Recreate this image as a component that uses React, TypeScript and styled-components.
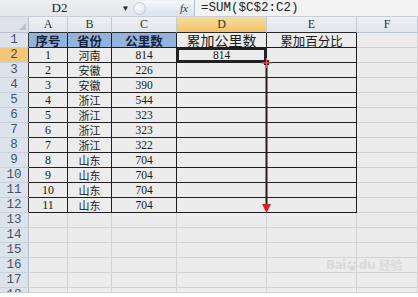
import React from "react";
import styled, { createGlobalStyle } from "styled-components";

const GlobalStyle = createGlobalStyle`
  body {
    margin: 0;
    background: #fff;
  }
`;

const rows: [number, string, number][] = [
  [1, "河南", 814],
  [2, "安徽", 226],
  [3, "安徽", 390],
  [4, "浙江", 544],
  [5, "浙江", 323],
  [6, "浙江", 323],
  [7, "浙江", 322],
  [8, "山东", 704],
  [9, "山东", 704],
  [10, "山东", 704],
  [11, "山东", 704],
];

const letters = ["A", "B", "C", "D", "E", "F"];

const Page = styled.div`
  width: 418px;
  height: 293px;
  overflow: hidden;
  background: #ececec;
`;

const FormulaBar = styled.div`
  height: 17px;
  display: flex;
  align-items: stretch;
  background: linear-gradient(#eef0f3, #e2e5ea);
  border-bottom: 1px solid #c9ced6;
  box-sizing: border-box;
`;

const NameBox = styled.div`
  width: 119px;
  display: flex;
  align-items: center;
  justify-content: center;
  font-family: "Liberation Serif", serif;
  font-size: 13px;
  color: #222;
`;

const DropArrow = styled.div`
  width: 13px;
  display: flex;
  align-items: center;
  justify-content: center;
  font-size: 8px;
  color: #222;
`;

const FxPill = styled.div`
  width: 62px;
  margin: 1px 0;
  display: flex;
  align-items: center;
  justify-content: space-between;
  padding: 0 6px 0 1px;
  box-sizing: border-box;
  border-radius: 8px 0 0 8px;
  background: linear-gradient(#f5f8fc, #dbe2ed);
`;

const Knob = styled.div`
  width: 11px;
  height: 11px;
  border-radius: 50%;
  border: 1px solid #c4ccd8;
  background: radial-gradient(circle at 40% 35%, #ffffff, #d6dde8);
`;

const Fx = styled.span`
  font-family: "Liberation Serif", serif;
  font-style: italic;
  font-size: 11px;
  color: #333;
`;

const FormulaInput = styled.div`
  flex: 1;
  display: flex;
  align-items: center;
  padding-left: 6px;
  background: #f3f3f3;
  border-left: 1px solid #b9bfc8;
  font-family: "Liberation Mono", monospace;
  font-size: 12.5px;
  color: #222;
`;

const Sheet = styled.div`
  position: relative;
  display: grid;
  grid-template-columns: 29px 39px 44px 65px 90px 90px 1fr;
  grid-template-rows: 16px repeat(17, 15px) 5px;
`;

const Corner = styled.div`
  position: relative;
  background: #dfe3e9;
  border-right: 1px solid #b8c2ce;
  border-bottom: 1px solid #b8c2ce;
  box-sizing: border-box;

  &::after {
    content: "";
    position: absolute;
    right: 2px;
    bottom: 2px;
    border-left: 7px solid transparent;
    border-bottom: 7px solid #b7bfca;
  }
`;

const ColHead = styled.div<{ $active?: boolean; $boxed?: boolean }>`
  display: flex;
  align-items: center;
  justify-content: center;
  box-sizing: border-box;
  background: ${(p) =>
    p.$active
      ? "linear-gradient(#f9dc9c, #f1c36a)"
      : "linear-gradient(#eef1f5, #e0e5eb)"};
  border-right: 1px solid #c3cad3;
  border-bottom: 1px solid ${(p) => (p.$boxed ? "#2a2a2a" : "#b8c2ce")};
  font-family: "Liberation Serif", serif;
  font-size: 12px;
  color: #333;
`;

const RowHead = styled.div<{ $active?: boolean; $boxed?: boolean }>`
  display: flex;
  align-items: flex-start;
  justify-content: center;
  overflow: hidden;
  box-sizing: border-box;
  line-height: 15px;
  background: ${(p) => (p.$active ? "#f4c67c" : "#dce3ec")};
  border-right: 1px solid ${(p) => (p.$boxed ? "#3a3a3a" : "#b3bfcc")};
  border-bottom: 1px solid #c8d0da;
  font-family: "Liberation Mono", monospace;
  font-size: 12.5px;
  color: ${(p) => (p.$active ? "#6a4a1a" : "#45536b")};
`;

type CellKind = "num" | "cjk" | "head" | "title";

const fontFor: Record<CellKind, string> = {
  num: '11.5px "Liberation Serif", serif',
  cjk: '11px "Noto Sans CJK SC", sans-serif',
  head: '700 12.5px "Noto Sans CJK SC", sans-serif',
  title: '13px "Noto Sans CJK SC", sans-serif',
};

const Cell = styled.div<{
  $boxed?: boolean;
  $blue?: boolean;
  $kind?: CellKind;
  $size?: number;
  $selected?: boolean;
}>`
  display: flex;
  align-items: center;
  justify-content: center;
  box-sizing: border-box;
  line-height: 14px;
  white-space: nowrap;
  background: ${(p) => (p.$blue ? "#93b3da" : "#ececec")};
  border-right: 1px solid ${(p) => (p.$boxed ? "#1e1e1e" : "#d3d3d3")};
  border-bottom: 1px solid ${(p) => (p.$boxed ? "#1e1e1e" : "#d3d3d3")};
  box-shadow: ${(p) => (p.$selected ? "inset 0 0 0 2px #222" : "none")};
  font: ${(p) => fontFor[p.$kind ?? "num"]};
  ${(p) => (p.$size ? `font-size: ${p.$size}px;` : "")}
  color: ${(p) => (p.$kind === "head" ? "#15233f" : "#1a1a1a")};
`;

const Overlay = styled.svg`
  position: absolute;
  left: 0;
  top: 0;
  width: 418px;
  height: 276px;
  pointer-events: none;
`;

const Watermark = styled.div`
  position: absolute;
  left: 326px;
  top: 241px;
  display: flex;
  align-items: center;
  gap: 1px;
  font-family: "DejaVu Sans", sans-serif;
  font-size: 12px;
  line-height: 14px;
  font-weight: 700;
  color: #dadada;
  letter-spacing: -0.5px;
`;

const WatermarkCjk = styled.span`
  font-family: "Noto Sans CJK SC", sans-serif;
  font-size: 12px;
  margin-left: 3px;
`;

const App: React.FC = () => {
  const blank = (r: number) =>
    letters.map((l, i) => (
      <Cell key={`${r}-${l}`} $boxed={r <= 12 && i < 5} />
    ));

  return (
    <Page>
      <GlobalStyle />
      <FormulaBar>
        <NameBox>D2</NameBox>
        <DropArrow>▼</DropArrow>
        <FxPill>
          <Knob />
          <Fx>fx</Fx>
        </FxPill>
        <FormulaInput>=SUM($C$2:C2)</FormulaInput>
      </FormulaBar>

      <Sheet>
        <Corner />
        {letters.map((l, i) => (
          <ColHead key={l} $active={l === "D"} $boxed={i < 5}>
            {l}
          </ColHead>
        ))}

        <RowHead $boxed>1</RowHead>
        <Cell $boxed $blue $kind="head">
          序号
        </Cell>
        <Cell $boxed $blue $kind="head">
          省份
        </Cell>
        <Cell $boxed $blue $kind="head">
          公里数
        </Cell>
        <Cell $boxed $kind="title" $size={14}>
          累加公里数
        </Cell>
        <Cell $boxed $kind="title" $size={12.5}>
          累加百分比
        </Cell>
        <Cell />

        {rows.map(([n, prov, km], idx) => {
          const r = idx + 2;
          return (
            <React.Fragment key={r}>
              <RowHead $active={r === 2} $boxed>
                {r}
              </RowHead>
              <Cell $boxed $size={12}>
                {n}
              </Cell>
              <Cell $boxed $kind="cjk">
                {prov}
              </Cell>
              <Cell $boxed>{km}</Cell>
              <Cell $boxed $selected={r === 2}>
                {r === 2 ? "814" : ""}
              </Cell>
              <Cell $boxed />
              <Cell />
            </React.Fragment>
          );
        })}

        {[13, 14, 15, 16, 17, 18].map((r) => (
          <React.Fragment key={r}>
            <RowHead>{r}</RowHead>
            {blank(r)}
          </React.Fragment>
        ))}

        <Overlay viewBox="0 0 418 276">
          <rect x="264" y="43" width="5" height="5" fill="#222" />
          <line x1="266.5" y1="46" x2="266.5" y2="188" stroke="#2b1c1c" strokeWidth="2" />
          <polygon points="262,187 271,187 266.5,196" fill="#d4202c" />
          <line x1="261" y1="46" x2="272" y2="46" stroke="#e0606c" strokeWidth="1.2" />
          <line x1="266.5" y1="41" x2="266.5" y2="51" stroke="#e0606c" strokeWidth="1.2" />
        </Overlay>

        <Watermark>
          <span>Bai</span>
          <svg width="11" height="11" viewBox="0 0 12 12">
            <circle cx="3" cy="3" r="1.6" fill="#d6d6d6" />
            <circle cx="9" cy="3" r="1.6" fill="#d6d6d6" />
            <circle cx="1.5" cy="7" r="1.4" fill="#d6d6d6" />
            <circle cx="10.5" cy="7" r="1.4" fill="#d6d6d6" />
            <ellipse cx="6" cy="9" rx="3" ry="2.6" fill="#d6d6d6" />
          </svg>
          <span>du</span>
          <WatermarkCjk>经验</WatermarkCjk>
        </Watermark>
      </Sheet>
    </Page>
  );
};

export default App;
